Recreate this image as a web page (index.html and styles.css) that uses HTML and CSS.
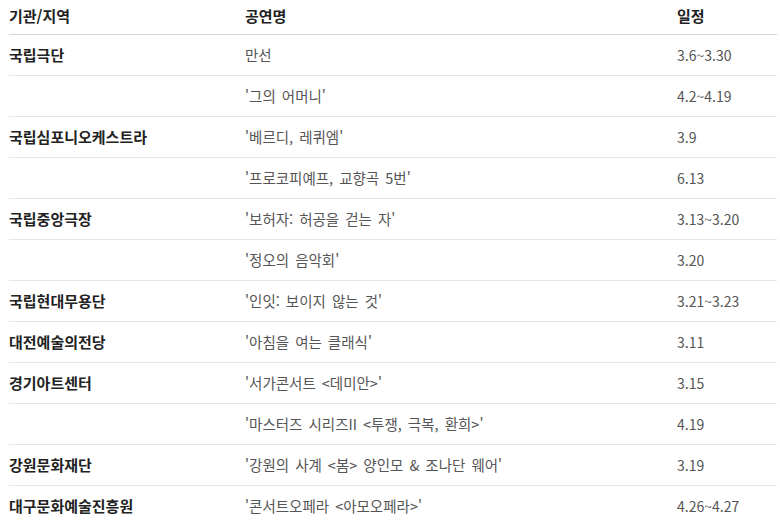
FILE: index.html
```html
<!DOCTYPE html>
<html lang="ko">
<head>
<meta charset="utf-8">
<link rel="stylesheet" href="styles.css">
</head>
<body>
<table class="schedule">
  <thead>
    <tr><th class="c-org">기관/지역</th><th class="c-title">공연명</th><th class="c-date">일정</th></tr>
  </thead>
  <tbody>
    <tr><td class="org">국립극단</td><td class="title">만선</td><td class="date">3.6~3.30</td></tr>
    <tr><td class="org"></td><td class="title">'그의 어머니'</td><td class="date">4.2~4.19</td></tr>
    <tr><td class="org">국립심포니오케스트라</td><td class="title">'베르디, 레퀴엠'</td><td class="date">3.9</td></tr>
    <tr><td class="org"></td><td class="title">'프로코피예프, 교향곡 5번'</td><td class="date">6.13</td></tr>
    <tr><td class="org">국립중앙극장</td><td class="title">'보허자: 허공을 걷는 자'</td><td class="date">3.13~3.20</td></tr>
    <tr><td class="org"></td><td class="title">'정오의 음악회'</td><td class="date">3.20</td></tr>
    <tr><td class="org">국립현대무용단</td><td class="title">'인잇: 보이지 않는 것'</td><td class="date">3.21~3.23</td></tr>
    <tr><td class="org">대전예술의전당</td><td class="title">'아침을 여는 클래식'</td><td class="date">3.11</td></tr>
    <tr><td class="org">경기아트센터</td><td class="title">'서가콘서트 &lt;데미안&gt;'</td><td class="date">3.15</td></tr>
    <tr><td class="org"></td><td class="title">'마스터즈 시리즈II &lt;투쟁, 극복, 환희&gt;'</td><td class="date">4.19</td></tr>
    <tr><td class="org">강원문화재단</td><td class="title">'강원의 사계 &lt;봄&gt; 양인모 &amp; 조나단 웨어'</td><td class="date">3.19</td></tr>
    <tr><td class="org">대구문화예술진흥원</td><td class="title">'콘서트오페라 &lt;아모오페라&gt;'</td><td class="date">4.26~4.27</td></tr>
  </tbody>
</table>
</body>
</html>
```
FILE: styles.css
```css
html, body {
  margin: 0;
  padding: 0;
  background: #ffffff;
}
body {
  padding: 0 3px 0 9px;
  font-family: "Noto Sans CJK KR", "Noto Sans", sans-serif;
  font-size: 15px;
}
.schedule {
  width: 768px;
  border-collapse: collapse;
  table-layout: fixed;
}
.schedule th {
  text-align: left;
  font-weight: 700;
  color: #222222;
  height: 31px;
  padding: 0 0 3px 0;
  vertical-align: middle;
  line-height: 20px;
  border-bottom: 1px solid #d6d6de;
}
.c-org { width: 236px; }
.c-title { width: 432px; }
.c-date { width: 100px; }
.schedule td {
  height: 40px;
  padding: 0;
  vertical-align: middle;
  line-height: 20px;
  color: #555555;
  border-bottom: 1px solid #e6e6e6;
}
.schedule tbody tr:last-child td {
  border-bottom: none;
}
.schedule td.org {
  font-weight: 700;
  color: #222222;
}
.schedule td.title {
  font-size: 14.5px;
  word-spacing: 2px;
}
.schedule td.date {
  font-size: 14px;
}
```
